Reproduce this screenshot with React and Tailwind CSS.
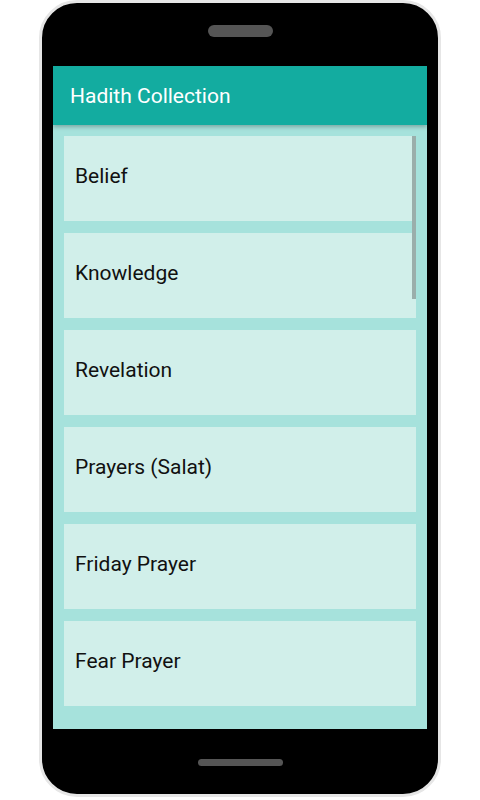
import React from 'react';

const chapters = [
  'Belief',
  'Knowledge',
  'Revelation',
  'Prayers (Salat)',
  'Friday Prayer',
  'Fear Prayer',
];

function App() {
  return (
    <div className="w-[480px] h-[800px] bg-white flex justify-center overflow-hidden" style={{ fontFamily: 'Roboto, "Liberation Sans", sans-serif' }}>
      <div className="w-[402px] h-[797px] border-[3px] border-[#e6e6e6] bg-black rounded-[38px] flex flex-col items-center overflow-hidden">
        {/* earpiece */}
        <div className="h-[63px] w-full flex justify-center">
          <div className="mt-[22px] w-[65px] h-[12px] rounded-full bg-[#555555]" />
        </div>

        {/* screen */}
        <div className="w-[374px] h-[663px] bg-[#a6e2dc] flex flex-col overflow-hidden">
          <div className="h-[59px] shrink-0 bg-[#13aca0] flex items-center pl-[17px] pt-[2px] text-white text-[21px] shadow-[0_2px_4px_rgba(0,0,0,0.25)] relative z-10">
            Hadith Collection
          </div>
          <div className="relative flex-1 overflow-hidden">
            <div className="flex flex-col gap-[12px] p-[11px]">
              {chapters.map((name) => (
                <div key={name} className="h-[85px] shrink-0 bg-[#d1efea] flex items-center pl-[11px] pb-[3px] text-[21px] text-[#111111]">
                  {name}
                </div>
              ))}
            </div>
            <div className="absolute right-[11px] top-[11px] w-[4px] h-[163px] bg-[#9aaeab]" />
          </div>
        </div>

        {/* home bar */}
        <div className="flex-1 w-full flex justify-center">
          <div className="mt-[30px] w-[85px] h-[7px] rounded-full bg-[#555555]" />
        </div>
      </div>
    </div>
  );
}

export default App;
